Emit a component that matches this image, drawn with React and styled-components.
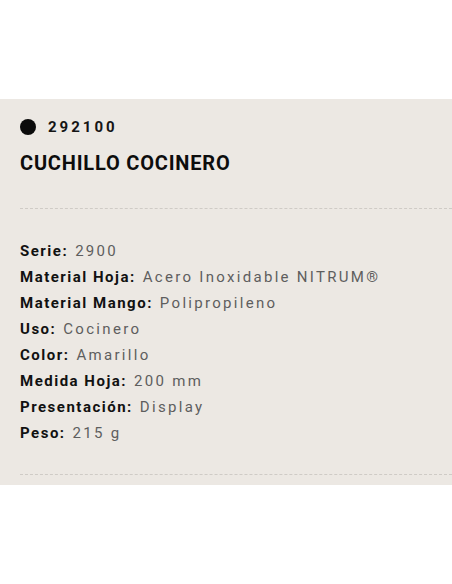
import React from 'react';
import styled, { createGlobalStyle } from 'styled-components';

const GlobalStyle = createGlobalStyle`
  body {
    margin: 0;
    background: #ffffff;
    font-family: Roboto, "Liberation Sans", Arial, sans-serif;
  }
`;

const Page = styled.div`
  padding-top: 99px;
`;

const Panel = styled.section`
  background-color: #ece8e3;
  padding: 20px 0 10px 20px;
`;

const CodeRow = styled.div`
  display: flex;
  align-items: center;
  gap: 12px;
  height: 16px;
`;

const Dot = styled.span`
  width: 16px;
  height: 16px;
  border-radius: 50%;
  background: #0b0b0b;
`;

const Code = styled.span`
  font-size: 15px;
  font-weight: 700;
  letter-spacing: 3px;
  color: #151515;
  line-height: 16px;
`;

const Title = styled.h1`
  margin: 17px 0 0;
  font-size: 20px;
  line-height: 22px;
  font-weight: 700;
  letter-spacing: 0.8px;
  color: #0d0d0d;
`;

const Divider = styled.hr`
  margin: ${(p) => p.$top}px 0 0;
  border: 0;
  border-top: 1px dashed #cfcbc6;
  height: 0;
`;

const Specs = styled.dl`
  margin: 29px 0 0;
`;

const Row = styled.div`
  display: flex;
  gap: 7px;
  font-size: 15px;
  line-height: 26px;
`;

const Label = styled.dt`
  font-weight: 700;
  color: #111;
  letter-spacing: 1.5px;
`;

const Value = styled.dd`
  margin: 0;
  color: #5e5e5e;
  letter-spacing: 2.3px;
`;

const specs = [
  ['Serie:', '2900'],
  ['Material Hoja:', 'Acero Inoxidable NITRUM®'],
  ['Material Mango:', 'Polipropileno'],
  ['Uso:', 'Cocinero'],
  ['Color:', 'Amarillo'],
  ['Medida Hoja:', '200 mm'],
  ['Presentación:', 'Display'],
  ['Peso:', '215 g'],
];

export default function App() {
  return (
    <Page>
      <GlobalStyle />
      <Panel>
        <CodeRow>
          <Dot />
          <Code>292100</Code>
        </CodeRow>
        <Title>CUCHILLO COCINERO</Title>
        <Divider $top={34} />
        <Specs>
          {specs.map(([label, value]) => (
            <Row key={label}>
              <Label>{label}</Label>
              <Value>{value}</Value>
            </Row>
          ))}
        </Specs>
        <Divider $top={28} />
      </Panel>
    </Page>
  );
}
